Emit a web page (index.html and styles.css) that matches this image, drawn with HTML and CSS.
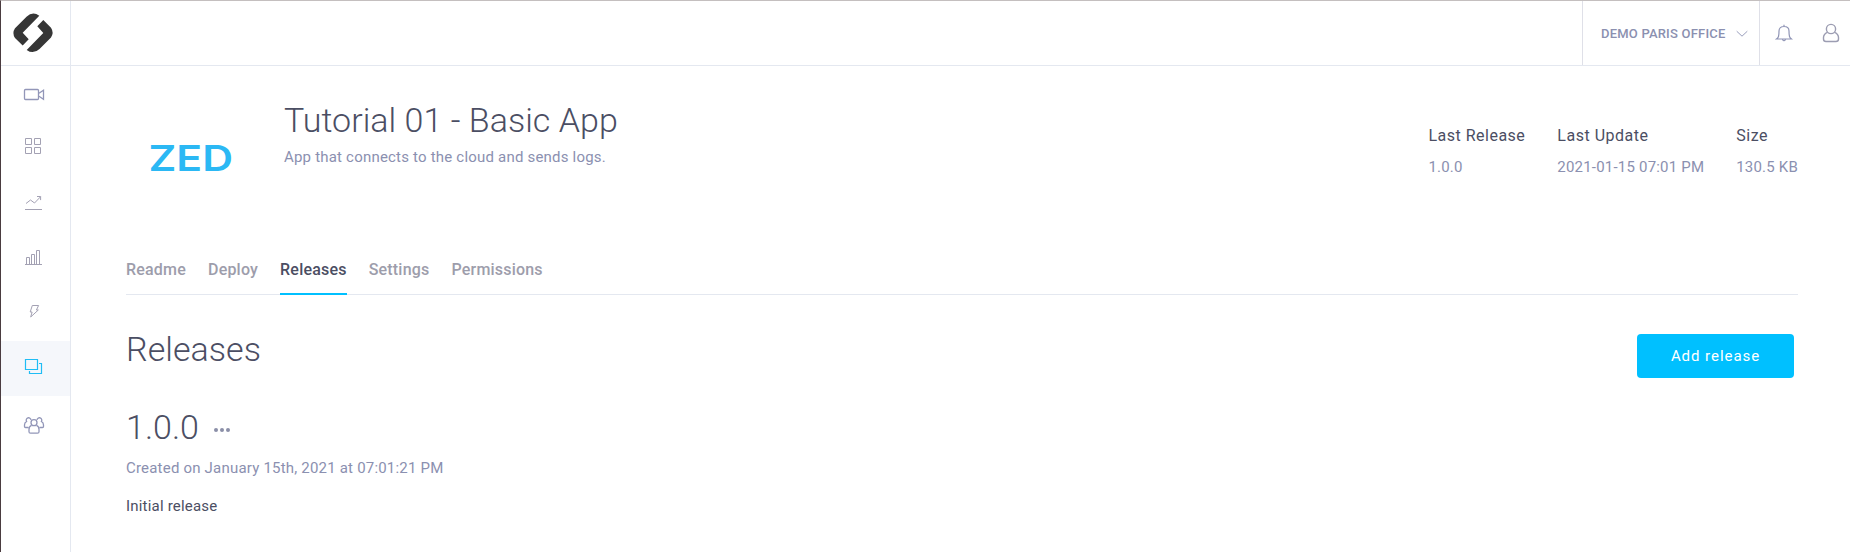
FILE: index.html
```html
<!DOCTYPE html>
<html lang="en">
<head>
<meta charset="utf-8">
<title>Tutorial 01 - Basic App</title>
<link rel="stylesheet" href="styles.css">
</head>
<body>
<div class="app">
  <aside class="sidebar">
    <a class="brand">
      <svg width="69" height="64" viewBox="1 1 69 64">
        <path d="M39.3 15.7 L22.7 32.7 L28.7 39.3 L22.7 45.5 L15 37.9 Q11.8 33 15 28.2 L26.5 16.7 Q32.8 10.8 39.3 15.7Z"/>
        <path d="M39.3 15.7 L22.7 32.7 L28.7 39.3 L22.7 45.5 L15 37.9 Q11.8 33 15 28.2 L26.5 16.7 Q32.8 10.8 39.3 15.7Z" transform="rotate(180 33 32.8)"/>
      </svg>
    </a>
    <nav class="menu">
      <a class="menu-item violet"><svg viewBox="1 66 69 55"><rect x="24.500" y="89.500" width="14" height="10" rx="1"/><path d="M39 93.200l4.500-3v9l-4.500-3"/></svg></a>
      <a class="menu-item"><svg viewBox="1 121 69 55"><path d="M25.500 138.500h6v6h-6zM34.500 138.500h6v6h-6zM25.500 147.500h6v6h-6zM34.500 147.500h6v6h-6z"/></svg></a>
      <a class="menu-item"><svg viewBox="1 176 69 55"><path d="M25 209.500h17M26 203.500l4.500-3.500 4 3 6-6.200M37 196.500h3.600v3.600"/></svg></a>
      <a class="menu-item"><svg viewBox="1 231 69 55"><path d="M25 264.500h17M26.500 264v-6.500h3v6.500M31.500 264v-9.500h3v9.500M36.500 264v-13.500h3v13.500"/></svg></a>
      <a class="menu-item"><svg viewBox="1 286 69 55"><path d="M32.300 305.500h6.300l-2.200 4.500h1.900l-7.600 7 1.400-5h-1.900z"/></svg></a>
      <a class="menu-item active"><svg viewBox="1 341 69 55"><path d="M25.500 359.500h12v10h-12zM39 363.500h2.500v10h-12v-2.500"/></svg></a>
      <a class="menu-item violet"><svg viewBox="1 396 69 55"><circle cx="34" cy="422.700" r="3"/><path d="M31.500 425.300q-2.500 1-2.500 4.200v2.200q0 1.500 1.500 1.500h7q1.500 0 1.500-1.500v-2.200q0-3.200-2.500-4.200M31 420a2.400 2.400 0 1 0-4.400 1.500q-2.100 1-2.100 3.500v1.500q0 1 1 1h3M37 420a2.400 2.400 0 1 1 4.400 1.500q2.100 1 2.100 3.500v1.500q0 1-1 1h-3"/></svg></a>
    </nav>
  </aside>
  <div class="page">
    <header class="topbar">
      <button class="workspace"><span>DEMO PARIS OFFICE</span>
        <svg width="12" height="8" viewBox="0 0 12 8"><path d="M.7 1.200l5.300 5 5.300-5"/></svg>
      </button>
      <svg class="top-icon bell" width="18" height="20" viewBox="0 0 18 20"><path d="M1.500 16c2-1.500 2.500-2.500 2.500-8 0-3 2-4.500 5-4.500s5 1.500 5 4.500c0 5.500.5 6.500 2.500 8zM9 1.800v1.500M7.500 16.500q1.500 2.500 3 0"/></svg>
      <svg class="top-icon user" width="18" height="20" viewBox="0 0 18 20"><circle cx="9" cy="6" r="4.600"/><path d="M5.400 9.300Q1.500 11 1.500 14.500v1.500q0 2.500 2.500 2.500h10q2.500 0 2.500-2.500v-1.500q0-3.500-3.900-5.200"/></svg>
    </header>
    <main class="content">
      <section class="app-head">
        <svg class="app-logo" width="158" height="110" viewBox="0 0 158 110"><text x="22.500" y="71" textLength="84.500" lengthAdjust="spacingAndGlyphs">ZED</text></svg>
        <div class="app-info">
          <h1>Tutorial 01 - Basic App</h1>
          <p class="muted summary">App that connects to the cloud and sends logs.</p>
        </div>
        <dl class="stats">
          <div><dt>Last Release</dt><dd>1.0.0</dd></div>
          <div><dt>Last Update</dt><dd>2021-01-15 07:01 PM</dd></div>
          <div><dt>Size</dt><dd>130.5 KB</dd></div>
        </dl>
      </section>
      <nav class="tabs">
        <a>Readme</a><a>Deploy</a><a class="current">Releases</a><a>Settings</a><a>Permissions</a>
      </nav>
      <section class="section-head">
        <h2>Releases</h2>
        <button class="primary">Add release</button>
      </section>
      <article class="release">
        <div class="release-title">
          <h3>1.0.0</h3>
          <svg width="18" height="6" viewBox="0 0 18 6"><circle cx="3" cy="3" r="2"/><circle cx="9" cy="3" r="2"/><circle cx="15" cy="3" r="2"/></svg>
        </div>
        <p class="muted created">Created on January 15th, 2021 at 07:01:21 PM</p>
        <p class="notes">Initial release</p>
      </article>
    </main>
  </div>
</div>
</body>
</html>
```
FILE: styles.css
```css
* { box-sizing: border-box; margin: 0; padding: 0; }
body { font-family: Roboto, "Liberation Sans", sans-serif; color: #4b4e63; background: #fff; overflow: hidden; }
svg { display: block; fill: none; flex: none; }
button { font: inherit; border: 0; background: none; }

.app { display: flex; height: 552px; border-left: 1px solid #4a3c40; border-top: 1px solid #c4bfbf; }

.sidebar { width: 70px; flex: none; border-right: 1px solid #e4e8f0; }
.brand { display: block; height: 65px; border-bottom: 1px solid #e4e8f0; }
.brand svg { fill: #363636; }
.menu { display: flex; flex-direction: column; }
.menu-item { height: 55px; }
.menu-item svg { width: 69px; height: 55px; stroke: #a3a1b3; stroke-width: 1; }
.menu-item.violet svg { stroke: #9296b8; stroke-width: 1.3; }
.menu-item.active { background: #f5f7fb; }
.menu-item.active svg { stroke: #1fbdf5; stroke-width: 1.2; }

.page { flex: 1; min-width: 0; }
.topbar { display: flex; justify-content: flex-end; align-items: center; height: 65px; border-bottom: 1px solid #e4e8f0; padding-right: 10px; }
.workspace { display: flex; align-items: center; gap: 10px; width: 178px; height: 64px; padding-left: 18px; border-left: 1px solid #dfe0e8; border-right: 1px solid #dfe0e8; color: #8b90b0; font-size: 13px; font-weight: 500; letter-spacing: 0.2px; white-space: nowrap; }
.workspace svg { stroke: #9a9ebc; margin-top: 2px; }
.top-icon { stroke: #8f94b5; stroke-width: 1.2; }
.bell { margin-left: 15px; }
.user { margin-left: 29px; stroke: #9c9db2; stroke-width: 1.4; }

.content { padding: 34px 52px 0 55px; }
.app-head { display: flex; height: 160px; }
.app-logo text { fill: #2bb8f4; font-family: Inter, sans-serif; font-size: 36px; font-weight: 600; }
.app-info { flex: 1; }
h1, h2, h3 { font-size: 34px; line-height: 40px; font-weight: 300; letter-spacing: 0.03px; }
.muted { color: #8b90b0; font-size: 15px; line-height: 20px; letter-spacing: 0.2px; }
.summary { margin-top: 7px; }
.stats { display: flex; gap: 32px; padding-top: 26px; }
.stats dt { font-size: 16px; line-height: 20px; letter-spacing: 0.5px; }
.stats dd { margin-top: 11px; font-size: 15px; line-height: 20px; letter-spacing: 0.2px; color: #8b90b0; }

.tabs { display: flex; gap: 22px; height: 35px; border-bottom: 1px solid #e4e8f0; font-size: 16px; line-height: 20px; font-weight: 500; letter-spacing: 0.2px; color: #9d9dab; }
.tabs a { height: 35px; flex: none; }
.tabs .current { color: #4b4e63; border-bottom: 2px solid #00c0ff; }

.section-head { display: flex; justify-content: space-between; padding: 34px 4px 0 0; height: 112px; }
.primary { width: 157px; height: 44px; margin-top: 5px; border-radius: 4px; background: #00c0ff; color: #fff; font-size: 15px; font-weight: 400; letter-spacing: 0.95px; }
.release-title { display: flex; align-items: center; gap: 14px; }
.release-title svg { fill: #8b8fa8; margin-top: 5px; }
.created { margin-top: 11px; }
.notes { margin-top: 18px; font-size: 15px; line-height: 20px; letter-spacing: 0.2px; }
```
